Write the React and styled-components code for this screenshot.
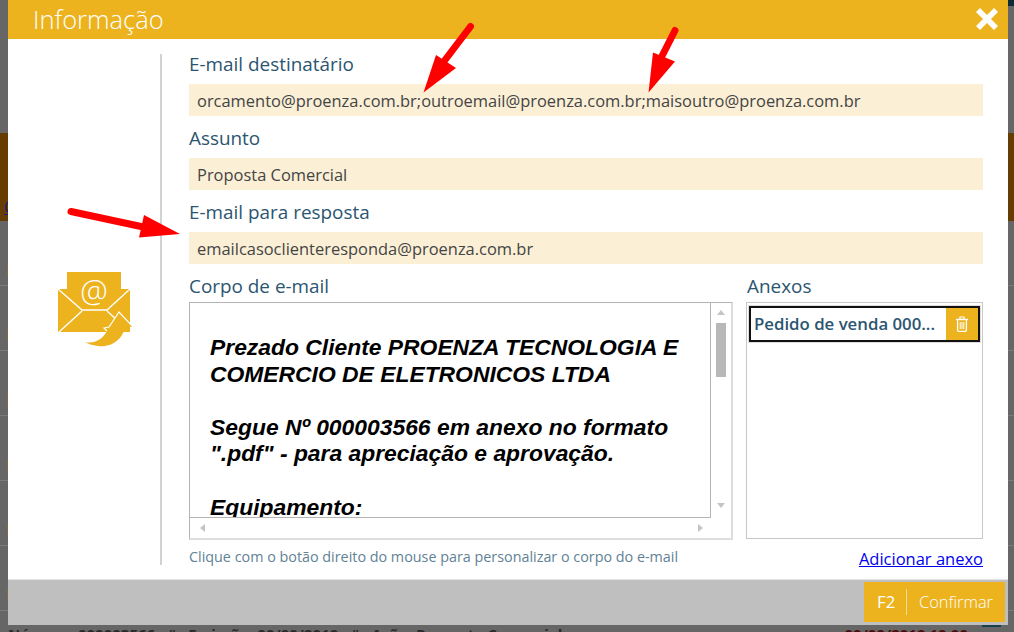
import React from "react";
import styled, { createGlobalStyle } from "styled-components";

const UI = `"Open Sans", "Noto Sans", sans-serif`;
const AMBER = "#ecb31f";
const INK = "#2b5570";

const Global = createGlobalStyle`
  html, body { margin: 0; padding: 0; background: #666; }
  body { font-family: ${UI}; overflow: hidden; }
`;

const Page = styled.div`
  position: relative;
  width: 1014px;
  height: 632px;
  overflow: hidden;
  background: #666;
`;

/* dimmed page behind the dialog */
const Backdrop = styled.div`
  position: absolute;
  inset: 0;
  display: flex;
  flex-direction: column;
`;
const BackTop = styled.div`
  height: 133px;
  flex: none;
  position: relative;
  &::after {
    content: "";
    position: absolute;
    left: 1006px;
    right: 0;
    top: 0;
    height: 6px;
    background: #0c2a38;
  }
`;
const Banner = styled.div`
  height: 88px;
  flex: none;
  background: #663c00;
  padding: 64px 0 0 4px;
  box-sizing: border-box;
  font: 16px/20px ${UI};
  color: #1a1a7a;
  text-decoration: underline;
`;
const BackRow = styled.div`
  height: 65px;
  flex: none;
  box-sizing: border-box;
  border-bottom: 1px solid #7a7a7a;
  padding-top: 43px;
  &::before {
    content: "";
    display: block;
    width: 1px;
    height: 12px;
    margin-left: 7px;
    background: #7a6a48;
  }
`;
const BackStatus = styled.div`
  display: flex;
  align-items: flex-start;
  padding: 14px 13px 0 8px;
  font: 700 15px/18px ${UI};
  color: #2a2a2a;
  white-space: nowrap;
`;
const BackDate = styled.span`
  color: #4a0c0c;
  margin-left: auto;
  margin-right: 14px;
`;
const BackBar = styled.span`
  width: 19px;
  height: 2px;
  background: #17404f;
`;

const Modal = styled.div`
  position: absolute;
  left: 8px;
  top: 0;
  width: 1000px;
  height: 625px;
  display: flex;
  flex-direction: column;
  background: #fff;
`;
const Header = styled.header`
  flex: none;
  height: 39px;
  margin-bottom: 1px;
  background: ${AMBER};
  display: flex;
  align-items: center;
  justify-content: space-between;
  padding: 0 10px 0 25px;
`;
const Title = styled.h1`
  margin: 0;
  font: 300 25.5px/39px ${UI};
  color: #fff;
`;
const CloseButton = styled.button`
  border: 0;
  padding: 0;
  background: none;
  width: 22px;
  height: 22px;
  display: block;
  margin-top: -1px;
`;
const Body = styled.div`
  flex: 1;
  min-height: 0;
  display: flex;
  padding: 12px 25px 14px 0;
`;
const Aside = styled.aside`
  flex: none;
  width: 154px;
  box-sizing: border-box;
  margin-top: 2px;
  border-right: 2px solid #d2d2d2;
  display: flex;
  align-items: center;
  justify-content: center;
  padding-left: 20px;
`;
const Main = styled.main`
  flex: 1;
  min-width: 0;
  margin-left: 27px;
  display: flex;
  flex-direction: column;
`;
const FieldGroup = styled.div`
  margin-bottom: 10px;
`;
const Label = styled.div`
  font: 400 18.9px/24px ${UI};
  color: ${INK};
  margin-bottom: ${(p) => p.$gap ?? 8}px;
  padding-left: ${(p) => p.$inset ?? 0}px;
  white-space: nowrap;
`;
const Field = styled.div`
  height: 32px;
  background: #fbf0d6;
  padding: 0 8px;
  font: 400 16.45px/33px ${UI};
  color: #444;
  white-space: nowrap;
`;
const Columns = styled.div`
  display: grid;
  grid-template-columns: 544px 237px;
  column-gap: 13px;
`;
const Editor = styled.div`
  height: 238px;
  box-sizing: border-box;
  border-left: 1px solid #b4b4b4;
  border-top: 1px solid #b4b4b4;
  border-right: 2px solid #ddd;
  border-bottom: 2px solid #ddd;
  display: grid;
  grid-template-columns: 1fr 20px;
  grid-template-rows: 1fr 20px;
  min-height: 0;
`;
const Document = styled.div`
  overflow: hidden;
  min-height: 0;
  padding: 31px 20px 0 20px;
  border-right: 1px solid #b4b4b4;
  border-bottom: 1px solid #b4b4b4;
  font: italic 700 22.87px/26.6px "Liberation Sans", Arial, sans-serif;
  color: #000;
`;
const Para = styled.p`
  margin: 0 0 26.6px;
`;
const VScroll = styled.div`
  display: flex;
  flex-direction: column;
  align-items: center;
  padding-top: 7px;
`;
const Thumb = styled.div`
  width: 10px;
  height: 54px;
  margin: 8px 0 126px;
  background: #b8b8b8;
`;
const Arrow = styled.span`
  width: 0;
  height: 0;
  display: block;
  border-style: solid;
  border-color: transparent;
  ${(p) => p.$dir === "up" && `border-width: 0 4px 5px; border-bottom-color: #c4c4c4;`}
  ${(p) => p.$dir === "down" && `border-width: 5px 4px 0; border-top-color: #c4c4c4;`}
  ${(p) => p.$dir === "left" && `border-width: 4px 5px 4px 0; border-right-color: #c4c4c4;`}
  ${(p) => p.$dir === "right" && `border-width: 4px 0 4px 5px; border-left-color: #c4c4c4;`}
`;
const HScroll = styled.div`
  display: flex;
  align-items: center;
  justify-content: space-between;
  padding: 0 8px 0 10px;
`;
const Corner = styled.div``;
const AttachBox = styled.div`
  height: 237px;
  box-sizing: border-box;
  border: 1px solid #c8c8c8;
  padding: 2px;
`;
const AttachItem = styled.div`
  height: 36px;
  width: 231px;
  margin-top: 1px;
  box-sizing: border-box;
  border: 2px solid #111;
  display: flex;
  align-items: stretch;
  box-shadow: 0 0 0 1px #ddd;
`;
const AttachName = styled.div`
  flex: 1;
  min-width: 0;
  padding-left: 3px;
  font: 600 16.8px/32px ${UI};
  color: ${INK};
  white-space: nowrap;
`;
const TrashButton = styled.button`
  flex: none;
  width: 32px;
  border: 0;
  padding: 0;
  background: ${AMBER};
  display: flex;
  align-items: center;
  justify-content: center;
`;
const Notes = styled.div`
  display: flex;
  justify-content: space-between;
  align-items: flex-start;
  margin-top: 7px;
`;
const Hint = styled.div`
  font: 400 14.35px/20px ${UI};
  color: #5f8296;
`;
const AddLink = styled.a`
  font: 400 16.5px/22px ${UI};
  color: #0000ee;
  text-decoration: underline;
  margin-top: 1px;
`;
const Footer = styled.footer`
  flex: none;
  height: 46px;
  box-sizing: border-box;
  border-top: 1px solid #e4e4e4;
  background: #bfbfbf;
  display: flex;
  justify-content: flex-end;
  align-items: flex-start;
  padding: 2px 3px 0 0;
`;
const ConfirmButton = styled.button`
  width: 141px;
  height: 40px;
  border: 0;
  padding: 0 12px 0 13px;
  background: ${AMBER};
  color: #fff;
  display: flex;
  align-items: center;
  font-family: ${UI};
`;
const Key = styled.span`
  font: 400 16.8px/20px ${UI};
  width: 31px;
  text-align: left;
`;
const Separator = styled.span`
  width: 1px;
  height: 26px;
  background: #f6dc98;
  margin-right: 12px;
`;
const Action = styled.span`
  font: 300 16.4px/20px ${UI};
`;
const Annotations = styled.svg`
  position: absolute;
  inset: 0;
  pointer-events: none;
`;

const CloseIcon = () => (
  <svg width="22" height="22" viewBox="0 0 22 22">
    <path d="M4 0 11 7 18 0 22 4 15 11 22 18 18 22 11 15 4 22 0 18 7 11 0 4Z" fill="#fff" />
  </svg>
);

const MailIcon = () => (
  <svg width="76" height="80" viewBox="56 270 76 80">
    <rect x="67" y="272" width="54" height="44" fill={AMBER} />
    <path d="M58 289H130V332H58Z" fill={AMBER} />
    <path d="M58 289 82 310 107 310 130 289" fill="none" stroke="#fff" strokeWidth="1.4" />
    <path d="M59 332 82 311M107 311 119 322" fill="none" stroke="#fff" strokeWidth="1.4" />
    <text x="94" y="302" textAnchor="middle" fontFamily="Open Sans, sans-serif" fontWeight="300" fontSize="31" fill="#fff">@</text>
    <path d="M119 312 133 327 125 326C124 338 112 348 98 346 92 345 88 344 85 342 94 344 102 340 107 331L104 328 109 327Z" fill={AMBER} />
    <path d="M133 327 119 312 109 327 104 328 107 331" fill="none" stroke="#fff" strokeWidth="1.2" />
  </svg>
);

const TrashIcon = () => (
  <svg width="12" height="16" viewBox="0 0 12 16" fill="none" stroke="#fff">
    <path d="M0 3.5H12" strokeWidth="1.4" />
    <path d="M4 3V1H8V3" strokeWidth="1.2" />
    <path d="M1.6 4V14.2Q1.6 15.3 2.7 15.3H9.3Q10.4 15.3 10.4 14.2V4" strokeWidth="1.3" />
    <path d="M4.2 6V13M6 6V13M7.8 6V13" strokeWidth="1" />
  </svg>
);

const RedArrow = ({ tail, neck, a, tip, b }) => (
  <g>
    <line x1={tail[0]} y1={tail[1]} x2={neck[0]} y2={neck[1]} stroke="#f00" strokeWidth="7" strokeLinecap="round" />
    <polygon points={`${a.join(",")} ${tip.join(",")} ${b.join(",")}`} fill="#f00" />
  </g>
);

const fields = [
  ["E-mail destinatário", "orcamento@proenza.com.br;outroemail@proenza.com.br;maisoutro@proenza.com.br"],
  ["Assunto", "Proposta Comercial"],
  ["E-mail para resposta", "emailcasoclienteresponda@proenza.com.br"],
];

export default function App() {
  return (
    <Page>
      <Global />
      <Backdrop>
        <BackTop />
        <Banner>C</Banner>
        <BackRow />
        <BackRow />
        <BackRow />
        <BackRow />
        <BackRow />
        <BackRow />
        <BackStatus>
          <span>Número: 000003566 &nbsp; # &nbsp; Emissão: 00/00/2019 &nbsp; # &nbsp; Ação: Proposta Comercial</span>
          <BackDate>00/00/2019 10:00</BackDate>
          <BackBar />
        </BackStatus>
      </Backdrop>
      <Modal>
        <Header>
          <Title>Informação</Title>
          <CloseButton aria-label="Fechar"><CloseIcon /></CloseButton>
        </Header>
        <Body>
          <Aside><MailIcon /></Aside>
          <Main>
            {fields.map(([label, value]) => (
              <FieldGroup key={label}>
                <Label>{label}</Label>
                <Field>{value}</Field>
              </FieldGroup>
            ))}
            <Columns>
              <div>
                <Label $gap={4}>Corpo de e-mail</Label>
                <Editor>
                  <Document>
                    <Para>Prezado Cliente PROENZA TECNOLOGIA E COMERCIO DE ELETRONICOS LTDA</Para>
                    <Para>Segue Nº 000003566 em anexo no formato ".pdf" - para apreciação e aprovação.</Para>
                    <Para>Equipamento:</Para>
                  </Document>
                  <VScroll>
                    <Arrow $dir="up" />
                    <Thumb />
                    <Arrow $dir="down" />
                  </VScroll>
                  <HScroll>
                    <Arrow $dir="left" />
                    <Arrow $dir="right" />
                  </HScroll>
                  <Corner />
                </Editor>
              </div>
              <div>
                <Label $gap={4} $inset={1}>Anexos</Label>
                <AttachBox>
                  <AttachItem>
                    <AttachName>Pedido de venda 000...</AttachName>
                    <TrashButton aria-label="Remover"><TrashIcon /></TrashButton>
                  </AttachItem>
                </AttachBox>
              </div>
            </Columns>
            <Notes>
              <Hint>Clique com o botão direito do mouse para personalizar o corpo do e-mail</Hint>
              <AddLink href="#">Adicionar anexo</AddLink>
            </Notes>
          </Main>
        </Body>
        <Footer>
          <ConfirmButton>
            <Key>F2</Key>
            <Separator />
            <Action>Confirmar</Action>
          </ConfirmButton>
        </Footer>
      </Modal>
      <Annotations width="1014" height="632" viewBox="0 0 1014 632">
        <RedArrow tail={[470.5, 26.5]} neck={[442, 64]} a={[436, 55]} tip={[423.5, 92.5]} b={[456, 68]} />
        <RedArrow tail={[675, 30.5]} neck={[660, 60]} a={[653, 52.5]} tip={[648.5, 92.5]} b={[675, 61.5]} />
        <RedArrow tail={[71, 211.5]} neck={[148, 228]} a={[144, 215]} tip={[180, 234]} b={[139, 237.5]} />
      </Annotations>
    </Page>
  );
}
